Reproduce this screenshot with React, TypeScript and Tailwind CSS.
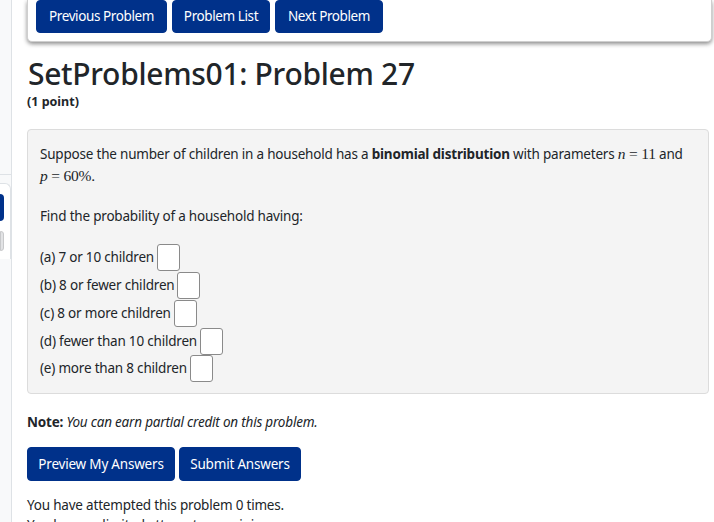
import React from "react";

const Btn = ({ children, className = "" }: { children: React.ReactNode; className?: string }) => (
  <button className={`bg-[#00318a] text-white rounded-[4px] border border-[#00318a] ${className}`}>{children}</button>
);

const AnsBox = () => (
  <span className="inline-block align-middle w-[23px] h-[27px] bg-white border border-[#8a8a8a] rounded-[3px] ml-[3px]" />
);

const M = ({ children }: { children: React.ReactNode }) => (
  <span style={{ fontFamily: '"Liberation Serif", "DejaVu Serif", serif' }} className="text-[15.5px]">{children}</span>
);

export default function App() {
  const items = [
    "(a) 7 or 10 children",
    "(b) 8 or fewer children",
    "(c) 8 or more children",
    "(d) fewer than 10 children",
    "(e) more than 8 children",
  ];
  return (
    <div
      className="flex w-[714px] h-[522px] overflow-hidden bg-white text-[#212529]"
      style={{ fontFamily: '"Noto Sans", "Open Sans", sans-serif' }}
    >
      <div className="w-[12px] shrink-0 bg-[#f8f9fa] border-r border-[#dee2e6] flex flex-col">
        <div className="h-[175px] border-b border-[#dee2e6]" />
        <div className="mt-[8px] bg-white border-t border-r border-[#dee2e6] rounded-tr-[6px] pt-[10px] pb-[8px] flex flex-col gap-[10px]">
          <div className="h-[27px] w-[4px] bg-[#00318a] rounded-r-[4px]" />
          <div className="h-[20px] w-[4px] bg-[#e2e3e5] border border-[#c8c9cb] rounded-r-[3px]" />
        </div>
      </div>
      <div className="flex-1 pl-[15px] pr-[2px]">
        <div className="bg-white rounded-b-[5px] shadow-[0_2px_4px_rgba(0,0,0,0.45)] border border-t-0 border-[#cfcfcf] px-[8px] pb-[8px] flex gap-[5px] h-[42px] w-[685px]">
          <Btn className="w-[131px] h-[33px] text-[13.5px] tracking-[-0.4px]">Previous Problem</Btn>
          <Btn className="w-[98px] h-[33px] text-[13.5px] tracking-[-0.4px]">Problem List</Btn>
          <Btn className="w-[108px] h-[33px] text-[13.5px] tracking-[-0.4px]">Next Problem</Btn>
        </div>
        <h2 className="mt-[12px] text-[30px] leading-[40px] font-medium tracking-[-0.3px] ml-[1px]">SetProblems01: Problem 27</h2>
        <div className="text-[12.5px] font-bold leading-[16px]">(1 point)</div>
        <div className="mt-[19px] w-[682px] h-[265px] bg-[#f4f4f4] border border-[#dcdcdc] rounded-[4px] px-[12px] pt-[13px] text-[13.5px] leading-[21px] tracking-[-0.2px]">
          <p>
            Suppose the number of children in a household has a <b>binomial distribution</b> with parameters{" "}
            <M><i>n</i> = 11</M> and
            <br />
            <M><i>p</i> = 60%.</M>
          </p>
          <p className="mt-[19px]">Find the probability of a household having:</p>
          <div className="mt-[17px] flex flex-col">
            {items.map((t) => (
              <div key={t} className="h-[27.75px] flex items-center">
                <span>{t}</span>
                <AnsBox />
              </div>
            ))}
          </div>
        </div>
        <p className="mt-[18px] text-[13.5px] tracking-[-0.2px]">
          <b>Note:</b> <i>You can earn partial credit on this problem.</i>
        </p>
        <div className="mt-[15px] flex gap-[4px]">
          <Btn className="w-[148px] h-[34px] text-[13.5px] tracking-[-0.2px]">Preview My Answers</Btn>
          <Btn className="w-[122px] h-[34px] text-[13.5px] tracking-[-0.2px]">Submit Answers</Btn>
        </div>
        <p className="mt-[14px] text-[13.5px] leading-[20px] tracking-[-0.2px]">You have attempted this problem 0 times.</p>
        <p className="text-[13.5px] leading-[20px] tracking-[-0.2px]">You have unlimited attempts remaining.</p>
      </div>
    </div>
  );
}
